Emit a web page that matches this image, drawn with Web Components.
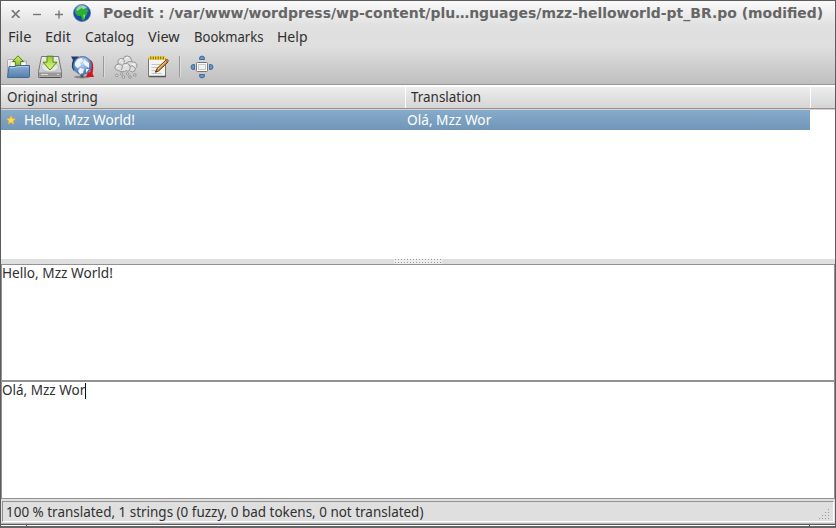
<!DOCTYPE html>
<html lang="en">
<head>
<meta charset="utf-8">
<title>Poedit</title>
<style>
html,body{margin:0;height:100%;overflow:hidden}
body{font:14px/20px "Noto Sans","Open Sans",sans-serif;color:#303030}
</style>
</head>
<body>
<po-window></po-window>
<script>
const define=(name,html,ready)=>customElements.define(name,class extends HTMLElement{
  constructor(){super();this.attachShadow({mode:'open'}).innerHTML=html;}
  connectedCallback(){if(ready)ready.call(this);}
});

/* A single-line label condensed to the width given in its "w" attribute. */
define('ui-label',`<style>:host{display:block;flex:none;white-space:nowrap}span{display:inline-block;transform-origin:0 50%}</style><span></span>`,function(){
  const s=this.shadowRoot.querySelector('span');
  s.textContent=this.getAttribute('text');
  const w=+this.getAttribute('w');
  this.style.width=w+'px';
  s.style.transform=`scaleX(${w/s.offsetWidth})`;
});

const icons={
close:['12 12','<path d="M2.3 2.5 9 9.5M9 2.5 2.3 9.5" stroke="#777" stroke-width="1.8"/><path d="M1.5 2.7h2M8 2.7h2M1.5 9.3h2M8 9.3h2" stroke="#777"/>'],
minus:['12 12','<path d="M1 6.5h8" stroke="#777" stroke-width="1.4"/>'],
plus:['12 12','<path d="M1 6.5h8M5 2.5v8" stroke="#777" stroke-width="1.4"/>'],
app:['18 18','<defs><radialGradient id="g" cx=".45" cy=".2"><stop offset="0" stop-color="#c9def8"/><stop offset=".5" stop-color="#5c8fdc"/><stop offset="1" stop-color="#1f4ca0"/></radialGradient></defs><circle cx="9" cy="9" r="8.5" fill="url(#g)" stroke="#31599a" stroke-width=".6"/><path d="M2.2 7.2 4 4.2 8 2l3 1-1 2.2 3-.6 2.5 2.6-2 1.6.8 1.4-2.4 2.5-.9 4-2.1-1.1-.9-4.2-3.2.6-2.3-2.4z" fill="#2fae34"/><path d="M3 5.3Q8 0 14 3.5L10 5 8.5 4 4.5 7z" fill="#c5f1c8" opacity=".65"/><path d="M10 11l2-.4.1 2-1 2.5z" fill="#64ee4c"/>'],
open:['24 24','<defs><linearGradient id="f" x2="0" y2="1"><stop stop-color="#8caed0"/><stop offset="1" stop-color="#537fac"/></linearGradient><linearGradient id="a" x2="0" y2="1"><stop stop-color="#d4f16f"/><stop offset="1" stop-color="#80b51c"/></linearGradient></defs><path d="M1.5 22V5.5q0-1 1-1h5L9 6h11.5v5" fill="#f2f2f2" stroke="#aaa"/><path d="M4 7h16v8H4z" fill="#fff" stroke="#bbb" stroke-width=".7"/><path d="M12 .8 17.5 6.5h-2.8v4.5H9.3V6.5H6.5z" fill="url(#a)" stroke="#53810d"/><path d="M1.5 22.5 3 11.5H9L11 10.5h12.5v11q0 1-1 1z" fill="url(#f)" stroke="#416993"/><path d="M4 12.6h5.5l1.8-1h11" fill="none" stroke="#b4cde5"/>'],
save:['24 24','<defs><linearGradient id="d" x2="0" y2="1"><stop stop-color="#eee"/><stop offset="1" stop-color="#bcbcbc"/></linearGradient><linearGradient id="a" x2="0" y2="1"><stop stop-color="#9ac73d"/><stop offset="1" stop-color="#dbff75"/></linearGradient></defs><path d="M3.5 1.5h17l3 15v6h-23v-6z" fill="url(#d)" stroke="#777"/><ellipse cx="12" cy="12" rx="8.5" ry="5" fill="#e7e7e7" stroke="#bbb"/><path d="M1 17.5h22v4H1z" fill="#999"/><path d="M2 22.5h20" stroke="#505050"/><path d="M3 19.5h7M19 19.5h2" stroke="#ddd"/><path d="M9 1.2h6v6h4L12 15 5 7.2h4z" fill="url(#a)" stroke="#568410"/>'],
update:['24 24','<defs><radialGradient id="w" cx=".45" cy=".35"><stop stop-color="#c4dbf3"/><stop offset=".7" stop-color="#86addc"/><stop offset="1" stop-color="#5580bb"/></radialGradient></defs><ellipse cx="12" cy="22" rx="8" ry="1.4" fill="#888"/><path d="M12 22.5v-3" stroke="#555" stroke-width="3"/><path d="M1 1.5h8L7 4Q2 9 4.5 17Q0 12 3 5z" fill="#23386f"/><path d="M19 4.5q6 1 3.5 14l1.5 3.5h-8l2-5.5 2 1q1.500-5-1-13z" fill="#d8131b"/><circle cx="12.5" cy="10.5" r="9" fill="url(#w)" stroke="#4d74ad"/><path d="M5 8l3-4 4-1 1 3-3 2 1 2-3 3-3-2zM14 4l5 4v5l-3-2-3-3zM10 13l4 1-1 4-3 1-2-3zM16 14l3 0-3 4z" fill="#edf5fb"/>'],
cloud:['24 24','<g fill="#e0e0e0" stroke="#929292"><path d="M4.500 15.500Q.5 15 1 12q.5-3 3.500-2.800Q2.500 6 5.500 4q2-1 3.500 0 1-3.300 4.500-3t4 4q-.2 1-.8 1.700Q22.500 6.500 23 10.500q0 2-1.700 3 .5 3-2.800 3.300-2 0-3-1.300-1.500 1.500-3.500 0-1.500 1.700-4 1.200-1.700-.2-3.500-1.200z"/><path d="M9 4.200q2 1 1.300 3.300M4.500 9.200Q8 8.500 8.300 12q0 2-1.300 3M16.500 6.800Q13 6 12 8.500q-3-.5-3.800 2M12 8.500q4 0 4.300 3.500 0 2-1 3.200M16.300 11q2.500-1 5 2.500" fill="none"/><circle cx="2.800" cy="20.500" r="1.300"/><circle cx="7.500" cy="18.800" r="1.200"/><circle cx="9.500" cy="22" r="1.300"/><circle cx="13.500" cy="18.800" r="1.200"/><circle cx="16" cy="22" r="1.300"/><circle cx="20.800" cy="20" r="1.300"/></g><path d="M6 6q0-1.500 1.700-1.500M12 3.500q1-1.300 2.500-.8M3 12q0-1.600 1.500-1.700M11.500 11q.5-1.500 2-1.300M18.500 9.500q1.500-1.200 2.700 0" fill="none" stroke="#fff"/>'],
note:['24 24','<path d="M2.500 3.500h17v18h-17z" fill="#f4f4f4" stroke="#777"/><path d="M3 21.500h17" stroke="#555" stroke-width="1.500"/><path d="M5.500 9.500h9M5.500 12.500h7M5.500 15.500h4M5.500 18.500h10" stroke="#c4c4c4"/><path d="M3 1.500h16v3H3z" fill="#76591c"/><path d="M3.500 1v4M6 1v4M8.500 1v4M11 1v4M13.500 1v4M16 1v4M18.500 1v4" stroke="#f6d62e" stroke-width="1.500"/><path d="M9.500 17.200 11 13.500 20 5l2 2-9.300 9z" fill="#cf923b" stroke="#70410c"/><path d="M12 14l8-7.500" stroke="#f3c983"/><path d="M9 17.600l1-2 1 1z" fill="#222"/><path d="M19.500 5.300 21 4l1.700 1.700-1.300 1.500z" fill="#d87870" stroke="#70410c" stroke-width=".6"/>'],
full:['24 24','<g fill="#6a97cb" stroke="#3b659b" stroke-width=".9"><path d="M9.500 4.500Q9 1 12 1t2.500 3.500zM9.500 19.500Q9 23 12 23t2.500-3.500zM4.500 9.500Q1 9 1 12t3.500 2.500zM19.500 9.500Q23 9 23 12t-3.500 2.500z"/></g><rect x="6.500" y="7.500" width="11" height="9" rx="1" fill="#fff" stroke="#777"/><rect x="8.500" y="9.500" width="7" height="5" fill="#f3f3ef" stroke="#c8c8c0"/>'],
star:['10 10','<path d="M5 .7 6.300 3.600 9.500 3.900 7.100 6 7.800 9.200 5 7.500 2.200 9.200 2.900 6 .5 3.900 3.700 3.600z" fill="#ffdc4b" stroke="#d9b04a" stroke-width=".7"/>']};
define('ui-icon',`<style>:host{display:block;flex:none}svg{display:block}</style><div></div>`,function(){
  const [box,art]=icons[this.getAttribute('name')],[w,h]=box.split(' ');
  this.shadowRoot.querySelector('div').innerHTML=`<svg width="${w}" height="${h}" viewBox="0 0 ${box}" fill="none">${art}</svg>`;
});

define('po-titlebar',`<style>
:host{display:flex;align-items:center;height:25px;padding-left:9px;box-sizing:border-box;gap:10px;color:#666;font:bold 14px/22px "DejaVu Sans",sans-serif}
ui-icon[name=app]{margin:-1px 0 0 -3px}ui-label{margin:-2px 0 0 2px}</style>
<ui-icon name="close"></ui-icon><ui-icon name="minus"></ui-icon><ui-icon name="plus"></ui-icon><ui-icon name="app"></ui-icon>
<ui-label w="720.500" text="Poedit : /var/www/wordpress/wp-content/plu…nguages/mzz-helloworld-pt_BR.po (modified)"></ui-label>`);

define('po-menubar',`<style>:host{display:flex;gap:14px;height:23px;padding:1px 0 0 7px;box-sizing:border-box}</style>
<ui-label w="23" text="File"></ui-label><ui-label w="26" text="Edit"></ui-label><ui-label w="49" text="Catalog"></ui-label><ui-label w="32" text="View"></ui-label><ui-label w="69" text="Bookmarks"></ui-label><ui-label w="31" text="Help"></ui-label>`);

define('po-toolbar',`<style>:host{display:flex;gap:8px;height:35px;padding:6px 0 0 5px;box-sizing:border-box}
i{width:1px;height:21px;margin:1px 2px 0 1px;background:#999;box-shadow:1px 0 #dcdcdc}</style>
<ui-icon name="open"></ui-icon><ui-icon name="save"></ui-icon><ui-icon name="update"></ui-icon><i></i><ui-icon name="cloud"></ui-icon><ui-icon name="note"></ui-icon><i></i><ui-icon name="full"></ui-icon>`);

define('po-list',`<style>
:host{display:block;height:175px;flex:none;background:#fff;box-sizing:border-box;border-top:1px solid #989898}
.row{display:grid;grid-template-columns:405px 405px 24px}
.head{height:24px;box-sizing:border-box;background:linear-gradient(#fff 0 2px,#ededed 2px,#d6d6d6 22px);border-bottom:1px solid #989090;box-shadow:0 1px #d6d2cf}
.head>*{padding:2px 0 0 6px;border-right:1px solid #fff}.head>:nth-child(2){padding-left:5px}.head>:last-child{padding:0;border:0}
.sel{height:20px;width:809px;margin-top:1px;background:linear-gradient(#87abca,#7096b9);color:#fff;grid-template-columns:404px 405px}
.cell{display:flex;align-items:center;padding-left:5px;gap:8px}.cell+.cell{padding-left:2px}
</style>
<div class="row head"><div><ui-label w="91" text="Original string"></ui-label></div><div><ui-label w="70" text="Translation"></ui-label></div><div></div></div>
<div class="row sel"><div class="cell"><ui-icon name="star"></ui-icon><ui-label w="111" text="Hello, Mzz World!"></ui-label></div><div class="cell"><ui-label w="84" text="Olá, Mzz Wor"></ui-label></div></div>`);

define('po-splitter',`<style>:host{display:flex;flex:none;justify-content:center;height:5px;background:#dfdfdf}
svg{display:block}</style><svg width="48" height="5"><defs><pattern id="p" width="3" height="3" patternUnits="userSpaceOnUse"><rect width="3" height="3" fill="#eee"/><rect x="1" width="1" height="1" fill="#999"/></pattern></defs><rect width="48" height="5" fill="url(#p)"/></svg>`);

define('po-editor',`<style>:host{display:flex;flex:none;background:#fff;box-sizing:border-box;border:1px solid #929292;line-height:19px}
i{display:none;width:1px;height:16px;background:#111;margin-top:1px}:host([caret]) i{display:block}div{margin-top:-2px}</style><div><slot></slot></div><i></i>`);

define('po-status',`<style>:host{display:flex;flex:none;padding:2px 1px 1px;box-sizing:border-box;height:25px;background:#dfdfdf;border-bottom:1px solid #b5b5b5}
div{flex:1;display:flex;justify-content:space-between;box-sizing:border-box;padding-left:3px;border:1px solid #929292;border-color:#929292 #fff #fff #929292}
svg{align-self:end}</style><div><ui-label w="417" text="100 % translated, 1 strings (0 fuzzy, 0 bad tokens, 0 not translated)"></ui-label>
<svg width="14" height="12" fill="#999"><path d="M9 0h1v1H9zM6 3h1v1H6zM9 3h1v1H9zM3 6h1v1H3zM6 6h1v1H6zM9 6h1v1H9zM0 9h1v1H0zM3 9h1v1H3zM6 9h1v1H6zM9 9h1v1H9z"/></svg></div>`);

define('po-window',`<style>
:host{display:flex;flex-direction:column;width:836px;height:528px;box-sizing:border-box;border:1px solid #5d5b5d;border-bottom:2px solid #666;background:#dfdfdf}
.chrome{height:83px;flex:none;background:linear-gradient(#fafafa,#e0e0e0 25px,#dfdfdf 45px,#bfbfbf 83px)}
.bottom{height:2px;flex:none;display:grid;grid-template-columns:25px 1px 782px 1px 1fr;border-top:1px solid #5d5b5d;box-sizing:border-box;background:#fff}
.bottom :nth-child(even){background:#555}
</style>
<div class="chrome"><po-titlebar></po-titlebar><po-menubar></po-menubar><po-toolbar></po-toolbar></div>
<po-list></po-list><po-splitter></po-splitter>
<po-editor style="height:117px"><ui-label w="111" text="Hello, Mzz World!"></ui-label></po-editor>
<po-editor caret style="height:118px"><ui-label w="83" text="Olá, Mzz Wor"></ui-label></po-editor>
<po-status></po-status><div class="bottom"><i></i><i></i><i></i><i></i><i></i></div>`);
</script>
</body>
</html>
